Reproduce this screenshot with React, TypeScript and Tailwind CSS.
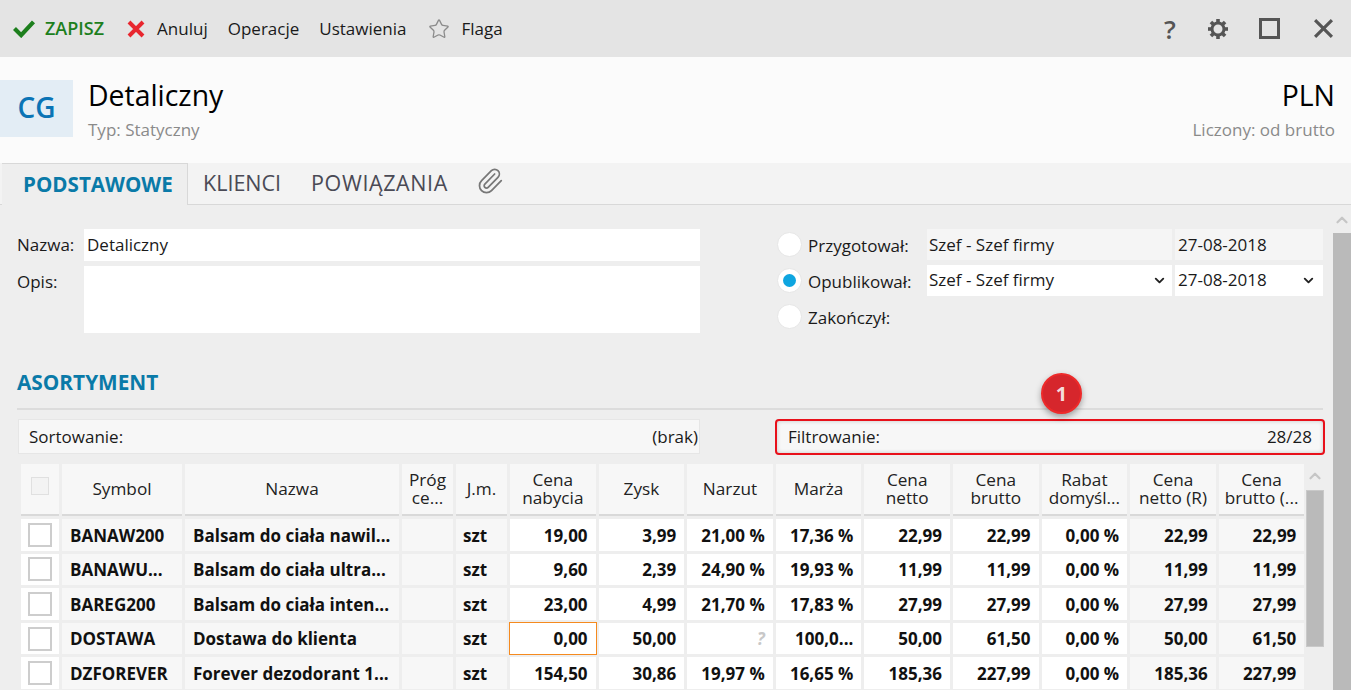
import { Star, Paperclip, ChevronDown, ChevronUp } from 'lucide-react';

const COLS = 'grid grid-cols-[38px_120px_214px_51px_51px_repeat(9,85.6px)] gap-x-[3px]';

const HEADERS = [
  'Symbol',
  'Nazwa',
  'Próg ce...',
  'J.m.',
  'Cena nabycia',
  'Zysk',
  'Narzut',
  'Marża',
  'Cena netto',
  'Cena brutto',
  'Rabat domyśl...',
  'Cena netto (R)',
  'Cena brutto (...',
];

const ROWS = [
  ['BANAW200', 'Balsam do ciała nawil...', '19,00', '3,99', '21,00 %', '17,36 %', '22,99', '22,99', '0,00 %', '22,99', '22,99'],
  ['BANAWU...', 'Balsam do ciała ultra...', '9,60', '2,39', '24,90 %', '19,93 %', '11,99', '11,99', '0,00 %', '11,99', '11,99'],
  ['BAREG200', 'Balsam do ciała inten...', '23,00', '4,99', '21,70 %', '17,83 %', '27,99', '27,99', '0,00 %', '27,99', '27,99'],
  ['DOSTAWA', 'Dostawa do klienta', '0,00', '50,00', '?', '100,0...', '50,00', '61,50', '0,00 %', '50,00', '61,50'],
  ['DZFOREVER', 'Forever dezodorant 1...', '154,50', '30,86', '19,97 %', '16,65 %', '185,36', '227,99', '0,00 %', '185,36', '227,99'],
];

function Gear() {
  return (
    <svg viewBox="0 0 22 22" className="ml-[27px] size-[22px]">
      <circle cx="11" cy="11" r="6" fill="none" stroke="#555" strokeWidth="3" />
      {[0, 45, 90, 135, 180, 225, 270, 315].map((a) => (
        <path key={a} d="M11 5V1" stroke="#555" strokeWidth="3.6" transform={`rotate(${a} 11 11)`} />
      ))}
    </svg>
  );
}

function Radio({ on }: { on?: boolean }) {
  return (
    <span className="flex size-[25px] shrink-0 items-center justify-center rounded-full border border-[#e6e6e6] bg-white">
      {on && <span className="size-[13px] rounded-full bg-[#0ea5e0]" />}
    </span>
  );
}

function Table() {
  return (
    <div className="flex flex-col gap-y-[3px]">
      <div className={COLS}>
        <div className="flex h-[52px] items-center justify-center border-b-2 border-[#d9d9d9] bg-[#f7f7f7] pb-[6px]">
          <span className="size-[18px] border border-[#e0e0e0] bg-[#f3f3f3]" />
        </div>
        {HEADERS.map((h) => (
          <div
            key={h}
            className="flex h-[52px] items-center justify-center border-b-2 border-[#d9d9d9] bg-[#f7f7f7] px-1 text-center text-[17.2px] leading-[18px] text-[#222]"
          >
            {h}
          </div>
        ))}
      </div>
      {ROWS.map((r) => (
        <div key={r[0]} className={`${COLS} h-[31.6px] font-bold text-[#111]`}>
          <div className="flex items-center justify-center bg-white">
            <span className="size-[24px] border-2 border-[#cdcdcd] bg-white" />
          </div>
          <div className="flex items-center overflow-hidden whitespace-nowrap bg-[#f7f7f7] pl-2 pt-px">{r[0]}</div>
          <div className="flex items-center overflow-hidden whitespace-nowrap bg-[#f7f7f7] pl-2 pt-px">{r[1]}</div>
          <div className="bg-[#f7f7f7]" />
          <div className="flex items-center bg-[#f7f7f7] pl-[7px] pt-px">szt</div>
          {r.slice(2).map((v, i) => (
            <div
              key={i}
              className={`flex items-center justify-end whitespace-nowrap pr-2 pt-px ${i >= 7 ? 'bg-[#f7f7f7]' : 'bg-white'} ${
                i === 0 && v === '0,00' ? 'outline-1 outline-[#f58a1f]' : ''
              } ${v === '?' ? 'italic text-[#c8c8c8]' : ''}`}
            >
              {v}
            </div>
          ))}
        </div>
      ))}
    </div>
  );
}

export default function App() {
  return (
    <div className="flex h-[690px] w-[1351px] flex-col overflow-hidden bg-[#eeeeee] font-['Open_Sans',sans-serif] text-[17px] text-[#1a1a1a]">
      {/* toolbar */}
      <div className="flex h-[57px] shrink-0 items-center bg-[#e4e4e4] pl-3 pr-[17px] text-[17px]">
        <svg viewBox="0 0 24 20" className="h-[19px] w-[24px]">
          <path d="M2 10l7 7L22 3" fill="none" stroke="#1d7f1d" strokeWidth="4.4" />
        </svg>
        <span className="ml-[9px] text-[18px] font-semibold text-[#1d7f1d]">ZAPISZ</span>
        <svg viewBox="0 0 20 20" className="ml-[22px] size-[20px]">
          <path d="M3 3l14 14M17 3L3 17" fill="none" stroke="#e8262e" strokeWidth="4" />
        </svg>
        <span className="ml-[11px]">Anuluj</span>
        <span className="ml-5">Operacje</span>
        <span className="ml-5">Ustawienia</span>
        <Star className="ml-[22px] size-[22px] text-[#8b8b8b]" strokeWidth={1.4} />
        <span className="ml-[11px]">Flaga</span>
        <div className="ml-auto flex items-center text-[#555]">
          <span className="w-5 text-center text-[26px] font-semibold leading-none">?</span>
          <Gear />
          <span className="ml-[30px] size-[21px] border-[3px] border-[#555]" />
          <svg viewBox="0 0 20 20" className="ml-[33px] size-[21px]">
            <path d="M2 2l16 16M18 2L2 18" fill="none" stroke="#555" strokeWidth="3" />
          </svg>
        </div>
      </div>

      {/* header */}
      <div className="flex h-[106px] shrink-0 items-start justify-between bg-[#fbfbfb] pr-[16px] pt-[23px]">
        <div className="flex">
          <div className="flex h-[57px] w-[73px] items-center justify-center bg-[#e3edf5] pb-[3px] text-[28px] font-semibold text-[#0b74b5]">
            CG
          </div>
          <div className="ml-[15px] -mt-[3px]">
            <div className="text-[28.4px] leading-[36px] text-black">Detaliczny</div>
            <div className="mt-[7px] leading-[20px] text-[#8a8a8a]">Typ: Statyczny</div>
          </div>
        </div>
        <div className="-mt-[3px] text-right">
          <div className="text-[28.4px] leading-[36px] text-black">PLN</div>
          <div className="mt-[7px] leading-[20px] text-[#8a8a8a]">Liczony: od brutto</div>
        </div>
      </div>

      {/* tabs */}
      <div className="flex h-[42px] shrink-0 items-stretch border-b border-[#d8d8d8] bg-[#f3f3f3] pl-[2px] text-[21.5px] text-[#4a4a55]">
        <div className="-mb-px flex w-[186px] items-center border-r border-t border-[#d8d8d8] bg-[#eeeeee] pl-[21px] text-[20.6px] font-bold text-[#0a7aa8]">
          PODSTAWOWE
        </div>
        <div className="ml-[15px] flex items-center">KLIENCI</div>
        <div className="ml-[30px] flex items-center tracking-[0.6px]">POWIĄZANIA</div>
        <Paperclip className="ml-[28px] mt-[4px] size-[28px] text-[#777]" strokeWidth={1.5} />
      </div>

      {/* body */}
      <div className="flex min-h-0 flex-1">
        <div className="min-w-0 flex-1 pl-[17px] pr-[10px] pt-[24px]">
          <div className="flex h-[104px] items-start">
            <div className="grid w-[683px] grid-cols-[67px_616px] gap-y-[5px]">
              <span className="leading-[32px]">Nazwa:</span>
              <div className="flex h-[32px] items-center bg-white pl-[3px]">Detaliczny</div>
              <span className="leading-[32px]">Opis:</span>
              <div className="h-[67px] bg-white" />
            </div>
            <div className="ml-[77px] grid auto-rows-[31px] grid-cols-[25px_119px_245px_148px] items-center gap-x-[3px] gap-y-[5px]">
              <Radio />
              <span className="ml-[3px] mt-[2px] whitespace-nowrap">Przygotował:</span>
              <div className="flex h-[31px] items-center bg-[#f5f5f5] pl-[2px]">Szef - Szef firmy</div>
              <div className="flex h-[31px] items-center bg-[#f5f5f5] pl-[3px]">27-08-2018</div>
              <Radio on />
              <span className="ml-[3px] mt-[2px] whitespace-nowrap">Opublikował:</span>
              <div className="flex h-[31px] items-center justify-between bg-white pb-px pl-[2px] pr-[5px]">
                Szef - Szef firmy
                <ChevronDown className="size-[15px] text-[#222]" strokeWidth={3} />
              </div>
              <div className="flex h-[31px] items-center justify-between bg-white pb-px pl-[3px] pr-[7px]">
                27-08-2018
                <ChevronDown className="size-[15px] text-[#222]" strokeWidth={3} />
              </div>
              <Radio />
              <span className="ml-[3px] mt-[2px] whitespace-nowrap">Zakończył:</span>
            </div>
          </div>

          {/* assortment */}
          <div className="mt-[33px] flex h-[44px] items-center border-b-2 border-[#dcdcdc] pb-[16px] pt-[8px] text-[20.8px] font-bold text-[#0a7aa8]">
            ASORTYMENT
          </div>
          <div className="relative mt-[9px] flex">
            <div className="ml-px flex h-[35px] w-[682px] shrink-0 items-center justify-between border border-[#e6e6e6] bg-[#f7f7f7] pl-[10px] pr-px">
              <span>Sortowanie:</span>
              <span>(brak)</span>
            </div>
            <div className="ml-[75px] flex h-[36px] w-[550px] shrink-0 items-center justify-between rounded-[4px] border-2 border-[#e8101a] bg-[#f7f7f7] pl-[11px] pr-[11px] shadow-[inset_0_0_4px_rgba(0,0,0,0.2)]">
              <span>Filtrowanie:</span>
              <span>28/28</span>
            </div>
            <div className="absolute left-[1024px] top-[-46px] flex size-[41px] items-center justify-center rounded-full border-2 border-[#ee2a2a] bg-[#d6262c] text-[20px] font-bold text-[#f4dcdc] shadow-[0_3px_6px_rgba(0,0,0,0.35)]">
              1
            </div>
          </div>
          <div className="mt-[9px] flex pl-1">
            <Table />
            <div className="ml-[2px] flex w-[18px] flex-col items-center">
              <ChevronUp className="mt-[3px] size-[18px] text-[#c6c6c6]" strokeWidth={3} />
              <div className="mt-[5px] h-[157px] w-[18px] border border-[#c9c9c9] bg-[#bababa]" />
            </div>
          </div>
        </div>

        {/* main scrollbar */}
        <div className="flex w-[18px] shrink-0 flex-col items-center">
          <ChevronUp className="mt-[6px] size-[18px] text-[#c6c6c6]" strokeWidth={3} />
          <div className="mt-[4px] w-full flex-1 bg-[#bababa]" />
        </div>
      </div>
    </div>
  );
}
